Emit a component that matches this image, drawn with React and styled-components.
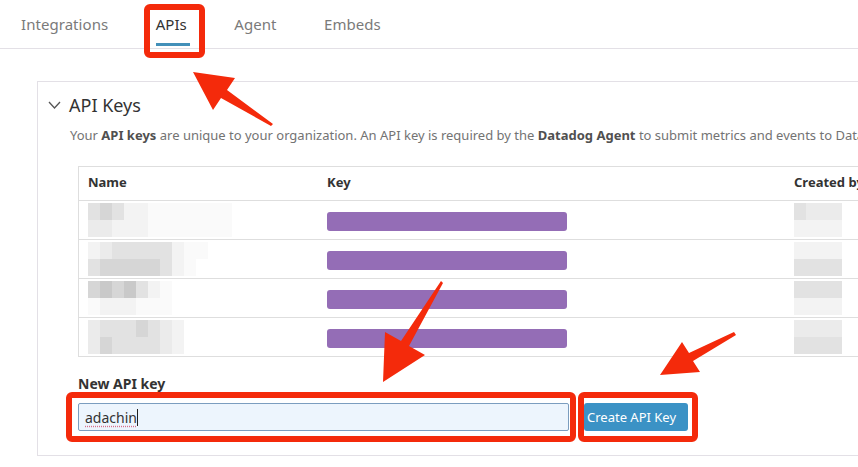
import React from 'react';
import styled, { createGlobalStyle } from 'styled-components';

const GlobalStyle = createGlobalStyle`
  html, body {
    margin: 0;
    padding: 0;
    background: #ffffff;
    overflow: hidden;
  }
  body {
    font-family: 'Noto Sans', 'Open Sans', sans-serif;
    color: #333333;
  }
`;

const Page = styled.div`
  position: relative;
  width: 858px;
  height: 467px;
  overflow: hidden;
  background: #ffffff;
`;

const TabBar = styled.nav`
  display: flex;
  gap: 47.5px;
  height: 48px;
  padding-left: 21px;
  border-bottom: 1px solid #e3e0e6;
`;

const Tab = styled.div`
  position: relative;
  display: flex;
  align-items: center;
  font-size: 15px;
  letter-spacing: 0.05px;
  color: ${({ $active }) => ($active ? '#333333' : '#7a7a7a')};

  &::after {
    content: '';
    display: ${({ $active }) => ($active ? 'block' : 'none')};
    position: absolute;
    left: 0;
    right: -3px;
    bottom: 2px;
    height: 3px;
    background: #4390b9;
  }
`;

const Panel = styled.section`
  box-sizing: border-box;
  width: 900px;
  height: 375px;
  margin: 32px 0 0 37px;
  border: 1px solid #e3e0e6;
  border-right: none;
  padding: 12px 0 0 10px;
`;

const PanelHeader = styled.div`
  display: flex;
  align-items: center;
  gap: 8px;
  height: 22px;
  font-size: 18px;
  color: #333333;

  & > svg {
    width: 13px;
    height: 8px;
  }
`;

const Description = styled.p`
  margin: 10px 0 0 22px;
  font-size: 13px;
  line-height: 18px;
  color: #737373;
  white-space: nowrap;

  & > b {
    font-weight: 700;
    color: #505050;
  }
`;

const Table = styled.div`
  margin: 22px 0 0 30px;
  border-top: 1px solid #dedede;
  border-left: 1px solid #dedede;
`;

const Row = styled.div`
  display: grid;
  grid-template-columns: 239px 467px 1fr;
  height: ${({ $head }) => ($head ? '33px' : '38px')};
  border-bottom: 1px solid #dedede;
`;

const HeadCell = styled.div`
  display: flex;
  align-items: center;
  padding: 0 0 3px 9px;
  font-size: 13px;
  font-weight: 700;
  color: #333333;
  white-space: nowrap;
`;

const Cell = styled.div`
  padding-left: ${({ $pad }) => $pad ?? 9}px;
`;

const KeyBar = styled.div`
  width: 240px;
  height: 19px;
  margin-top: 11px;
  border-radius: 3px;
  background: #946db6;
`;

const Blur = styled.div`
  display: grid;
  grid-template-columns: repeat(${({ $cols }) => $cols}, 12px);
  grid-auto-rows: 17px;
  margin-top: 2px;
`;

const Pixel = styled.span`
  background: ${({ $c }) => $c};
`;

const Label = styled.div`
  margin: 18px 0 0 30px;
  font-size: 14px;
  font-weight: 700;
  line-height: 18px;
  color: #333333;
`;

const FormRow = styled.div`
  display: flex;
  gap: 15px;
  margin: 10px 0 0 30px;
`;

const TextField = styled.div`
  box-sizing: border-box;
  display: flex;
  align-items: center;
  width: 491px;
  height: 28px;
  padding-left: 6px;
  border: 1px solid #7b9dbf;
  border-radius: 2px;
  background: #edf5fd;
  font-size: 14px;
  color: #333333;

  & > span {
    text-decoration: underline dotted #d8708a;
    text-underline-offset: 3px;
  }

  &::after {
    content: '';
    width: 1px;
    height: 17px;
    background: #222222;
  }
`;

const CreateButton = styled.button`
  width: 104px;
  height: 28px;
  border: none;
  border-radius: 3px;
  background: #3b92c5;
  color: #ffffff;
  font-family: inherit;
  font-size: 13px;
  text-align: left;
  padding: 0 0 0 3px;
`;

const Annotations = styled.svg`
  position: absolute;
  top: 0;
  left: 0;
  pointer-events: none;
`;

const shades = {
  c: '#c9c9c9',
  d: '#d6d6d6',
  e: '#e2e2e2',
  f: '#ebebeb',
  g: '#f3f3f3',
  w: '#fafafa',
};

const names = [
  ['edeggwwwwwww', 'ffgggwwwwwww'],
  ['gfeeeeegww', 'edddddegw'],
  ['dcdcegw', 'wgggwww'],
  ['feeedefg', 'fdeeeefg'],
];

const creators = [
  ['efff', 'gggg'],
  ['gggg', 'eeee'],
  ['eeee', 'gggg'],
  ['ffff', 'eeee'],
];

const Blurred = ({ lines, cols }) => (
  <Blur $cols={cols}>
    {lines.map((line, i) =>
      line
        .padEnd(cols, ' ')
        .split('')
        .map((ch, j) => <Pixel key={`${i}-${j}`} $c={shades[ch] || 'transparent'} />)
    )}
  </Blur>
);

const Chevron = () => (
  <svg viewBox='0 0 13 8' fill='none' stroke='#555' strokeWidth='1.3'>
    <path d='M1 1l5.5 6L12 1' />
  </svg>
);

const red = '#f42a0b';

const App = () => (
  <Page>
    <GlobalStyle />
    <TabBar>
      <Tab>Integrations</Tab>
      <Tab $active>APIs</Tab>
      <Tab>Agent</Tab>
      <Tab>Embeds</Tab>
    </TabBar>

    <Panel>
      <PanelHeader>
        <Chevron />
        API Keys
      </PanelHeader>
      <Description>
        Your <b>API keys</b> are unique to your organization. An API key is required by the{' '}
        <b>Datadog Agent</b> to submit metrics and events to Datadog.
      </Description>

      <Table>
        <Row $head>
          <HeadCell>Name</HeadCell>
          <HeadCell>Key</HeadCell>
          <HeadCell>Created by</HeadCell>
        </Row>
        {names.map((lines, i) => (
          <Row key={i}>
            <Cell>
              <Blurred lines={lines} cols={12} />
            </Cell>
            <Cell>
              <KeyBar />
            </Cell>
            <Cell $pad={9}>
              <Blurred lines={creators[i]} cols={6} />
            </Cell>
          </Row>
        ))}
      </Table>

      <Label>New API key</Label>
      <FormRow>
        <TextField>
          <span>adachin</span>
        </TextField>
        <CreateButton>Create API Key</CreateButton>
      </FormRow>
    </Panel>

    <Annotations width='858' height='467' viewBox='0 0 858 467'>
      <g fill='none' stroke={red} strokeWidth='6'>
        <rect x='147' y='7' width='55' height='48' rx='3' />
        <rect x='69' y='395' width='504' height='44' rx='3' />
        <rect x='581' y='395' width='114' height='44' rx='3' />
      </g>
      <g fill={red}>
        <polygon points='193,72 213,110 221,98 271,126 273,124 227,90 235,78' />
        <polygon points='383,382 385,332 401,341 441,281 443,283 409,346 425,355' />
        <polygon points='660,375 682,342 689,353 734,332 736,335 693,361 700,372' />
      </g>
    </Annotations>
  </Page>
);

export default App;
